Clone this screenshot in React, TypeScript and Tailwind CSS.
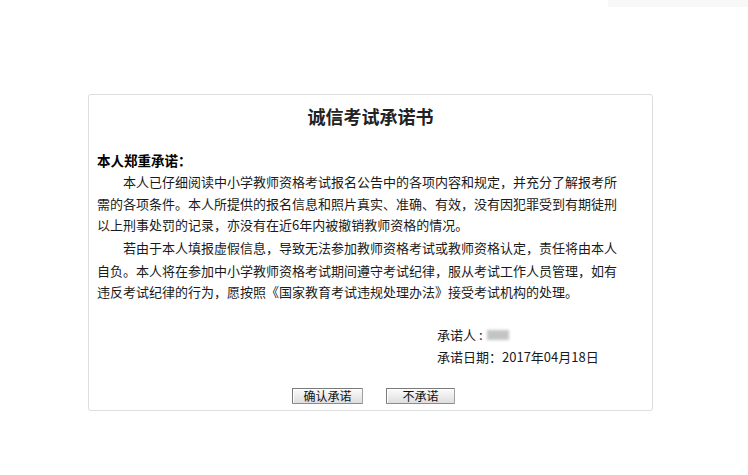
const font = { fontFamily: '"Noto Sans CJK SC", "Liberation Sans", sans-serif' };

function Btn({ label, w }: { label: string; w: string }) {
  return (
    <button
      className={`${w} h-[16px] flex items-center justify-center border border-[#7a7a7a] border-r-[#a0a0a0] border-b-[#8c8c8c] bg-gradient-to-b from-[#fbfbfb] to-[#dedede] text-[12px] leading-none text-[#111] rounded-[1px] shadow-[inset_1px_1px_0_#ffffff]`}
    >
      {label}
    </button>
  );
}

export default function App() {
  return (
    <div className="w-[748px] h-[475px] bg-white relative overflow-hidden" style={font}>
      {/* faint strip at top right */}
      <div className="absolute top-0 right-0 w-[140px] h-[7px] bg-[#f8f8f8]" />

      <div className="pt-[94px] pl-[88px]">
        <div className="w-[565px] h-[317px] border border-[#dedede] rounded-[3px] shadow-[0_0_1px_#eeeeee] flex flex-col text-[#1a1a1a]">
          <h1 className="pt-[9px] text-center text-[18px] leading-[24px] font-bold text-[#222]">
            诚信考试承诺书
          </h1>

          <div className="mt-[22px] pl-[8px] text-[13px] leading-[21.4px] whitespace-nowrap">
            <p className="font-bold text-[13.5px] text-black">本人郑重承诺：</p>
            <p className="indent-[26px]">
              本人已仔细阅读中小学教师资格考试报名公告中的各项内容和规定，并充分了解报考所
            </p>
            <p>需的各项条件。本人所提供的报名信息和照片真实、准确、有效，没有因犯罪受到有期徒刑</p>
            <p>以上刑事处罚的记录，亦没有在近6年内被撤销教师资格的情况。</p>
            <p className="indent-[26px] mt-[1px]">
              若由于本人填报虚假信息，导致无法参加教师资格考试或教师资格认定，责任将由本人
            </p>
            <p className="mt-[2px]">自负。本人将在参加中小学教师资格考试期间遵守考试纪律，服从考试工作人员管理，如有</p>
            <p>违反考试纪律的行为，愿按照《国家教育考试违规处理办法》接受考试机构的处理。</p>
          </div>

          <div className="mt-[21px] pl-[348px] text-[13px] leading-[22px] whitespace-nowrap">
            <div className="flex items-center">
              <span>承诺人 :</span>
              <span className="ml-[4px] w-[22px] h-[10px] bg-[#c4c4c4] blur-[1.5px]" />
            </div>
            <div>承诺日期：2017年04月18日</div>
          </div>

          <div className="mt-[20px] flex justify-center gap-[23px] pl-[6px]">
            <Btn label="确认承诺" w="w-[71px]" />
            <Btn label="不承诺" w="w-[69px]" />
          </div>
        </div>
      </div>
    </div>
  );
}
